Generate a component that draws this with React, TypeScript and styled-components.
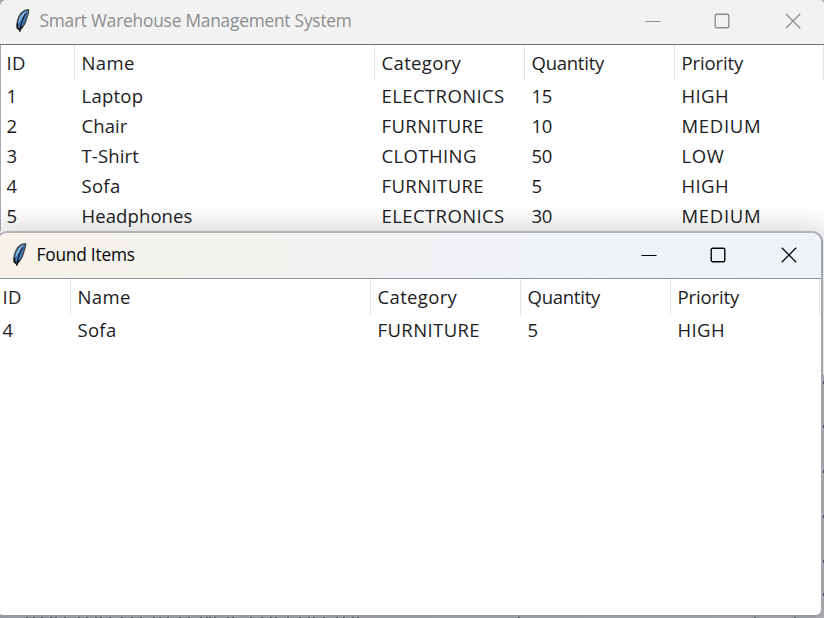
import React from 'react';
import styled, { createGlobalStyle } from 'styled-components';

const GlobalStyle = createGlobalStyle`
  * { box-sizing: border-box; }
  body { margin: 0; background: #8b9098; overflow: hidden; }
`;

const Desktop = styled.main`
  position: relative;
  width: 824px;
  height: 618px;
  overflow: hidden;
  background: linear-gradient(90deg, #a2a6ad, #b4b6b9);
  font-family: 'Open Sans', 'Noto Sans', sans-serif;
`;

const MainWindow = styled.section`
  height: 375px;
  border-radius: 7px 5px 0 0;
  overflow: hidden;
  background: #fff;
`;

const FoundWindow = styled.section`
  position: absolute;
  top: 231px;
  left: -4px;
  width: 827px;
  height: 386px;
  border: 2px solid #b2b3b5;
  border-right-color: #a1a5ac;
  border-bottom-color: #989ca5;
  border-radius: 11px 11px 7px 7px;
  overflow: hidden;
  background: #fff;
  box-shadow: 0 0 26px 5px rgba(0, 0, 0, 0.17);
`;

const TitleBar = styled.header<{ $active?: boolean }>`
  display: flex;
  align-items: center;
  height: ${p => (p.$active ? 46 : 45)}px;
  padding: ${p => (p.$active ? '0 24.5px 1px 13px' : '0 23.5px 3px 14px')};
  color: ${p => (p.$active ? '#050505' : '#8d8d8d')};
  background: ${p => (p.$active ? 'linear-gradient(90deg, #f6f2ea 0%, #f3f2ee 28%, #f0f2f5 56%, #eff3f5 100%)' : '#f2f2f2')};
  border-bottom: 1px solid ${p => (p.$active ? '#8b929c' : '#68707b')};
`;

const Title = styled.h1<{ $track: number }>`
  flex: 1;
  margin: 0 0 0 8.5px;
  font-size: 17.3px;
  font-weight: 400;
  line-height: 24px;
  letter-spacing: ${p => p.$track}px;
  white-space: nowrap;
`;

const Controls = styled.div`
  display: flex;
  gap: 55px;
`;

const Glyph = styled.svg`
  display: block;
  width: 16px;
  height: 16px;
  fill: none;
  stroke: currentColor;

  &:first-child {
    margin-right: -2px;
  }
`;

const FeatherSvg = styled.svg`
  display: block;
  width: 17px;
  height: 24px;
`;

const Table = styled.div<{ $found?: boolean }>`
  padding-left: ${p => (p.$found ? 2 : 0)}px;
  border-left: ${p => (p.$found ? 0 : 1)}px solid #a4a9b1;
  color: #1c1c24;
  font-size: 18.5px;
`;

const Row = styled.div<{ $head?: boolean; $found?: boolean }>`
  display: grid;
  grid-template-columns: ${p => (p.$found ? 71 : 74)}px 300px 150px 150px 149px;
  height: ${p => (p.$head ? 36 : 30)}px;
  line-height: ${p => (p.$head ? 36 : 30)}px;
`;

const Cell = styled.div<{ $track: number; $head?: boolean; $first?: boolean; $found?: boolean }>`
  padding-left: ${p => (p.$first ? (p.$found ? 2.6 : 5.6) : 6.5)}px;
  letter-spacing: ${p => p.$track}px;
  white-space: nowrap;
  border-right: 1px solid ${p => (p.$head ? '#e4e4e4' : 'transparent')};
`;

const Specks = styled.svg`
  position: absolute;
  left: 0;
  top: 0;
  width: 824px;
  height: 618px;
  fill: none;
  stroke: #4b4e54;
  pointer-events: none;
`;

const tracking: Record<string, number> = {
  ID: 0.2, Name: 0.4, Category: 0.35, Quantity: -0.25, Priority: -0.1,
  Laptop: 0.25, Chair: 0.1, 'T-Shirt': 0.15, Sofa: 0.3, Headphones: 0.1,
  ELECTRONICS: 0.4, FURNITURE: 0.4, CLOTHING: 0.4, HIGH: 0.4, MEDIUM: 0.7, LOW: 0.6,
};

const columns = ['ID', 'Name', 'Category', 'Quantity', 'Priority'];
const items = [
  ['1', 'Laptop', 'ELECTRONICS', '15', 'HIGH'],
  ['2', 'Chair', 'FURNITURE', '10', 'MEDIUM'],
  ['3', 'T-Shirt', 'CLOTHING', '50', 'LOW'],
  ['4', 'Sofa', 'FURNITURE', '5', 'HIGH'],
  ['5', 'Headphones', 'ELECTRONICS', '30', 'MEDIUM'],
];

const bottomSpecks = [27, 34, 42, 51, 56, 65, 79, 87, 96, 101, 110, 122, 132, 141, 154, 160, 168, 180, 189, 201, 207, 210, 215, 228, 233, 251, 262, 271, 276, 288, 300, 309, 314, 324, 337, 344, 353, 358, 519, 755, 795];
const sideSpecks = [382, 426, 471, 516, 561, 594];

function Feather() {
  return (
    <FeatherSvg viewBox="0 0 17 24">
      <path d="M14.500.8C11 1 7 3.500 5 7.500 3.300 11 2.600 15 3.300 19L5.700 20.500C9 18 11.300 14.500 12.300 10.500 13.200 7 15 4 14.500.8Z" fill="#3e7cc2" stroke="#4a4a48" strokeWidth="1.400" />
      <path d="M13 2.200C9.500 3 6.400 6.500 5.200 10.500L4.400 14.500 8.600 8Z" fill="#91badf" />
      <path d="M12 4C9.200 8 7 13 5.800 23" fill="none" stroke="#18202c" strokeWidth="1.300" />
      <path d="M3.500 14.500 3.500 18.800 5.700 21 8.400 17.500" fill="none" stroke="#161616" strokeWidth="1.700" />
    </FeatherSvg>
  );
}

function WindowControls() {
  return (
    <Controls>
      <Glyph viewBox="0 0 16 16"><path d="M.5 8.500h15" /></Glyph>
      <Glyph viewBox="0 0 16 16"><rect x="1.200" y="1.200" width="13.600" height="13.600" rx="1.500" strokeWidth="1.400" /></Glyph>
      <Glyph viewBox="0 0 16 16"><path d="m.8.8 14.400 14.400M15.200.8.8 15.200" strokeWidth="1.300" /></Glyph>
    </Controls>
  );
}

function ItemTable({ rows, found }: { rows: string[][]; found?: boolean }) {
  return (
    <Table $found={found}>
      {[columns, ...rows].map((row, r) => (
        <Row key={r} $head={r === 0} $found={found}>
          {row.map((text, c) => (
            <Cell key={c} $track={tracking[text] ?? -0.3} $head={r === 0} $first={c === 0} $found={found}>
              {text}
            </Cell>
          ))}
        </Row>
      ))}
    </Table>
  );
}

export default function App() {
  return (
    <>
      <GlobalStyle />
      <Desktop>
        <MainWindow>
          <TitleBar>
            <Feather />
            <Title $track={-0.2}>Smart Warehouse Management System</Title>
            <WindowControls />
          </TitleBar>
          <ItemTable rows={items} />
        </MainWindow>
        <FoundWindow>
          <TitleBar $active>
            <Feather />
            <Title $track={-0.2}>Found Items</Title>
            <WindowControls />
          </TitleBar>
          <ItemTable rows={[items[3]]} found />
        </FoundWindow>
        <Specks viewBox="0 0 824 618" aria-hidden="true">
          <path d={bottomSpecks.map(x => `M${x - 1} 617.5h2`).join('')} />
          <path d={sideSpecks.map(y => `M823.5 ${y - 1}v3`).join('')} />
        </Specks>
      </Desktop>
    </>
  );
}
